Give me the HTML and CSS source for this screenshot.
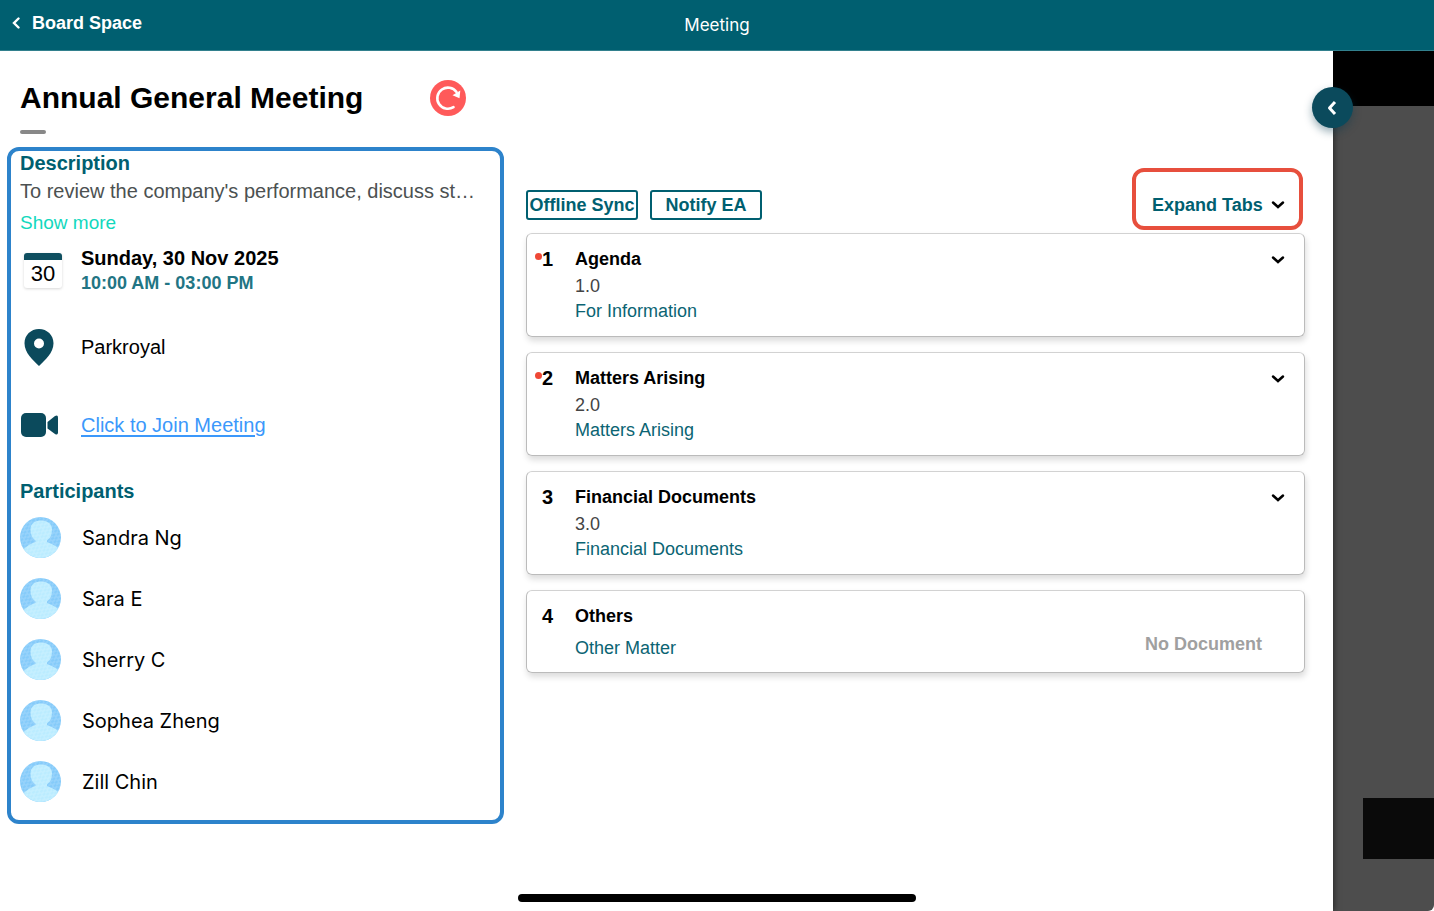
FILE: index.html
```html
<!DOCTYPE html>
<html lang="en">
<head>
<meta charset="utf-8">
<title>Meeting</title>
<link rel="stylesheet" href="styles.css">
</head>
<body>
<svg class="defs" width="0" height="0" aria-hidden="true">
  <defs>
    <pattern id="hatch" width="7" height="4" patternUnits="userSpaceOnUse" patternTransform="rotate(-38)">
      <path d="M0 1h4M3 3h4" stroke="#fff" stroke-width="0.8" opacity="0.35"/>
    </pattern>
    <clipPath id="round"><circle cx="20.5" cy="20.5" r="20.5"/></clipPath>
    <symbol id="avatar" viewBox="0 0 41 41">
      <g clip-path="url(#round)">
        <path fill="#85cbfa" d="M0 0h41v41H0z"/>
        <path fill="#bbecff" d="M21 3.500c-7 0-10.500 3.500-10.500 9 0 5 1.500 8.500 5 11v1.500c-3 1.500-8 2.500-12.500 8v8h36v-9c-4-4.500-9-5.500-12-7v-1.500c3.500-2.500 5-6 5-11 0-5.500-4-9-11-9z"/>
        <path fill="url(#hatch)" d="M0 0h41v41H0z"/>
      </g>
    </symbol>
    <symbol id="chevron" viewBox="0 0 14 10">
      <path d="M2 2.500l5 4.500 5-4.500" fill="none" stroke="#000" stroke-width="2.500" stroke-linecap="round"/>
    </symbol>
  </defs>
</svg>

<header class="topbar">
  <a class="back" href="#">
    <svg width="8" height="12" viewBox="0 0 8 12" aria-hidden="true"><path d="M6.500 1.500L2 6l4.500 4.500" fill="none" stroke="#fff" stroke-width="2.400" stroke-linecap="round"/></svg>
    Board Space
  </a>
  <div class="topbar-title">Meeting</div>
</header>

<div class="stage">
  <main class="sheet">
    <div class="heading">
      <h1>Annual General Meeting</h1>
      <button class="refresh" type="button" aria-label="Refresh">
        <svg width="36" height="36" viewBox="0 0 36 36" aria-hidden="true">
          <circle cx="18" cy="18" r="18" fill="#ff5a5a"/>
          <path d="M23.500 27.200A10.600 10.600 0 1 1 26.500 12" fill="none" stroke="#fff" stroke-width="2.600" stroke-linecap="round"/>
          <path d="M30.300 10.600l-.8 7.600-7-3z" fill="#fff"/>
        </svg>
      </button>
    </div>
    <div class="rule"></div>

    <div class="columns">
      <section class="details">
        <h2>Description</h2>
        <p class="summary">To review the company's performance, discuss st…</p>
        <a class="more" href="#">Show more</a>

        <div class="row when">
          <div class="icon"><div class="calendar">30</div></div>
          <div>
            <div class="date">Sunday, 30 Nov 2025</div>
            <div class="time">10:00 AM - 03:00 PM</div>
          </div>
        </div>
        <div class="row">
          <div class="icon">
            <svg width="38" height="38" viewBox="0 0 38 38" aria-hidden="true"><path fill="#0b4a5c" fill-rule="evenodd" d="M19 1C10.800 1 4.500 7.200 4.500 15.200 4.500 25 13 32 19 38c6-6 14.500-13 14.500-22.800C33.500 7.200 27.200 1 19 1zm0 9.500a5 5 0 1 1 0 10 5 5 0 0 1 0-10z"/></svg>
          </div>
          <div>Parkroyal</div>
        </div>
        <div class="row join">
          <div class="icon">
            <svg width="39" height="24" viewBox="0 0 39 24" aria-hidden="true"><rect x="1" y="0" width="25" height="24" rx="5" fill="#0b4a5c"/><path fill="#0b4a5c" d="M27.500 9l7.500-6q3-1.500 3 1.500v15q0 3-3 1.500L27.500 15.500z"/></svg>
          </div>
          <a href="#">Click to Join Meeting</a>
        </div>

        <h2>Participants</h2>
        <ul class="people">
          <li><svg class="avatar" aria-hidden="true"><use href="#avatar"/></svg>Sandra Ng</li>
          <li><svg class="avatar" aria-hidden="true"><use href="#avatar"/></svg>Sara E</li>
          <li><svg class="avatar" aria-hidden="true"><use href="#avatar"/></svg>Sherry C</li>
          <li><svg class="avatar" aria-hidden="true"><use href="#avatar"/></svg>Sophea Zheng</li>
          <li><svg class="avatar" aria-hidden="true"><use href="#avatar"/></svg>Zill Chin</li>
        </ul>
      </section>

      <section class="agenda">
        <div class="toolbar">
          <button class="outline" type="button">Offline Sync</button>
          <button class="outline" type="button">Notify EA</button>
          <button class="expand" type="button">Expand Tabs <svg class="chevron" aria-hidden="true"><use href="#chevron"/></svg></button>
        </div>
        <article class="card">
          <div class="number unread">1</div>
          <div class="body">
            <h3>Agenda</h3>
            <div class="code">1.0</div>
            <div class="topic">For Information</div>
          </div>
          <button class="toggle" type="button" aria-label="Expand Agenda"><svg class="chevron" aria-hidden="true"><use href="#chevron"/></svg></button>
        </article>
        <article class="card">
          <div class="number unread">2</div>
          <div class="body">
            <h3>Matters Arising</h3>
            <div class="code">2.0</div>
            <div class="topic">Matters Arising</div>
          </div>
          <button class="toggle" type="button" aria-label="Expand Matters Arising"><svg class="chevron" aria-hidden="true"><use href="#chevron"/></svg></button>
        </article>
        <article class="card">
          <div class="number">3</div>
          <div class="body">
            <h3>Financial Documents</h3>
            <div class="code">3.0</div>
            <div class="topic">Financial Documents</div>
          </div>
          <button class="toggle" type="button" aria-label="Expand Financial Documents"><svg class="chevron" aria-hidden="true"><use href="#chevron"/></svg></button>
        </article>
        <article class="card short">
          <div class="number">4</div>
          <div class="body">
            <h3>Others</h3>
            <div class="topic">Other Matter</div>
          </div>
          <div class="empty">No Document</div>
        </article>
      </section>
    </div>

    <button class="collapse" type="button" aria-label="Collapse panel">
      <svg width="14" height="16" viewBox="0 0 14 16" aria-hidden="true"><path d="M8 3L3.500 8 8 13" fill="none" stroke="#fff" stroke-width="3" stroke-linecap="square" stroke-linejoin="round"/></svg>
    </button>
  </main>
  <aside class="backdrop">
    <div class="backdrop-top"></div>
    <div class="backdrop-block"></div>
  </aside>
</div>
<div class="home-indicator"></div>
</body>
</html>
```

FILE: styles.css
```css
* {
  box-sizing: border-box;
}

body {
  margin: 0;
  min-height: 100vh;
  display: flex;
  flex-direction: column;
  position: relative;
  font-family: "Liberation Sans", Arial, sans-serif;
  font-size: 20px;
  line-height: 24px;
  color: #000;
  background: #fff;
}

h1, h2, h3, p, ul {
  margin: 0;
  padding: 0;
}

button {
  font: inherit;
  color: inherit;
  border: 0;
  padding: 0;
  background: none;
  cursor: pointer;
}

svg {
  display: block;
}

.defs {
  position: absolute;
}

.topbar {
  display: grid;
  grid-template-columns: 1fr auto 1fr;
  height: 51px;
  padding: 0 12px;
  background: #005f70;
  border-bottom: 1px solid #32808d;
  color: #fff;
}

.back {
  display: flex;
  align-items: center;
  gap: 12px;
  height: 45px;
  font-size: 18px;
  font-weight: bold;
  color: #fff;
  text-decoration: none;
}

.topbar-title {
  align-self: center;
  font: 17px/24px Inter, sans-serif;
}

.stage {
  flex: 1;
  display: flex;
}

.sheet {
  flex: 1;
  position: relative;
  z-index: 1;
  padding: 28px 28px 0 7px;
  background: #fff;
  box-shadow: 1px 0 6px rgba(0, 0, 0, 0.5);
  clip-path: inset(0 -30px 0 0);
}

.heading {
  display: flex;
  align-items: center;
  gap: 67px;
  padding-left: 13px;
}

h1 {
  font-size: 30px;
  line-height: 38px;
}

.rule {
  width: 26px;
  height: 4px;
  margin: 13px 0 0 13px;
  border-radius: 2px;
  background: #888;
}

.columns {
  display: grid;
  grid-template-columns: 497px 1fr;
  gap: 22px;
  align-items: start;
  margin-top: 13px;
}

.details {
  border: 4px solid #2d83cb;
  border-radius: 12px;
  padding: 0 9px 18px;
}

h2 {
  font-size: 20px;
  line-height: 24px;
  color: #005f70;
}

.summary {
  margin: 4px 0 8px;
  color: #4c5151;
  white-space: nowrap;
  overflow: hidden;
  text-overflow: ellipsis;
}

.more {
  display: block;
  font-size: 19px;
  color: #12d8bd;
  text-decoration: none;
}

.row {
  display: flex;
  align-items: center;
  gap: 22px;
  min-height: 40px;
  margin-bottom: 38px;
}

.when {
  margin: 10px 0 32px;
}

.join {
  margin-bottom: 34px;
}

.icon {
  width: 39px;
  flex: none;
}

.calendar {
  width: 38px;
  height: 35px;
  margin-left: 4px;
  border-top: 7px solid #0f4f60;
  border-radius: 3px;
  box-shadow: 0 1px 3px rgba(0, 0, 0, 0.16);
  font-size: 22px;
  line-height: 28px;
  text-align: center;
}

.date {
  font-weight: bold;
  line-height: 26px;
}

.time {
  font-size: 18px;
  font-weight: bold;
  color: #227584;
}

.join a {
  color: #3b98fb;
  text-underline-offset: 3px;
}

.people {
  display: grid;
  gap: 20px;
  margin-top: 14px;
  list-style: none;
  font-family: Inter, sans-serif;
}

.people li {
  display: flex;
  align-items: center;
  gap: 21px;
}

.avatar {
  width: 41px;
  height: 41px;
}

.agenda {
  display: grid;
  gap: 15px;
  padding-top: 21px;
}

.toolbar {
  display: flex;
  align-items: flex-end;
  gap: 12px;
  height: 62px;
  margin-bottom: -12px;
  padding-right: 2px;
  font-size: 18px;
  font-weight: bold;
  color: #005f70;
}

.outline {
  width: 112px;
  height: 30px;
  margin-bottom: 10px;
  border: 2px solid #005f70;
  border-radius: 3px;
  white-space: nowrap;
}

.expand {
  display: flex;
  align-items: center;
  justify-content: space-between;
  width: 171px;
  height: 62px;
  margin-left: auto;
  padding: 11px 14px 0 16px;
  border: 4px solid #e74f3d;
  border-radius: 12px;
}

.chevron {
  width: 14px;
  height: 10px;
}

.card {
  display: flex;
  min-height: 104px;
  padding: 13px 19px 0 15px;
  border: 1px solid #bbb;
  border-top-color: #d2d2d2;
  border-radius: 6px;
  box-shadow: 1px 4px 6px rgba(0, 0, 0, 0.14);
  font-size: 18px;
}

.number {
  position: relative;
  width: 33px;
  font-size: 20px;
  font-weight: bold;
}

.unread::before {
  content: "";
  position: absolute;
  left: -7px;
  top: 6px;
  width: 7px;
  height: 7px;
  border-radius: 50%;
  background: #ef4836;
}

.body {
  flex: 1;
}

h3 {
  font-size: 18px;
  line-height: 24px;
}

.code {
  margin: 3px 0 1px;
  color: #444;
}

.topic {
  color: #0b6473;
}

.toggle {
  align-self: flex-start;
  margin-top: 8px;
}

.short {
  min-height: 83px;
  padding-right: 42px;
}

.short .topic {
  margin-top: 8px;
}

.empty {
  align-self: flex-end;
  padding-bottom: 16px;
  font-weight: bold;
  color: #a0a0a0;
}

.collapse {
  position: absolute;
  top: 36px;
  right: -20px;
  display: grid;
  place-items: center;
  width: 41px;
  height: 41px;
  border-radius: 50%;
  background: #0b4a5c;
  box-shadow: 0 4px 8px rgba(11, 60, 80, 0.4);
}

.backdrop {
  display: flex;
  flex-direction: column;
  justify-content: space-between;
  width: 101px;
  padding-bottom: 52px;
  background: #4d4d4d;
  border-bottom-right-radius: 6px;
}

.backdrop-top {
  height: 55px;
  background: #000;
}

.backdrop-block {
  height: 61px;
  margin-left: 30px;
  background: #0a0a0a;
}

.home-indicator {
  position: absolute;
  z-index: 2;
  left: 50%;
  bottom: 9px;
  width: 398px;
  height: 8px;
  margin-left: -199px;
  border-radius: 4px;
  background: #000;
}
```
